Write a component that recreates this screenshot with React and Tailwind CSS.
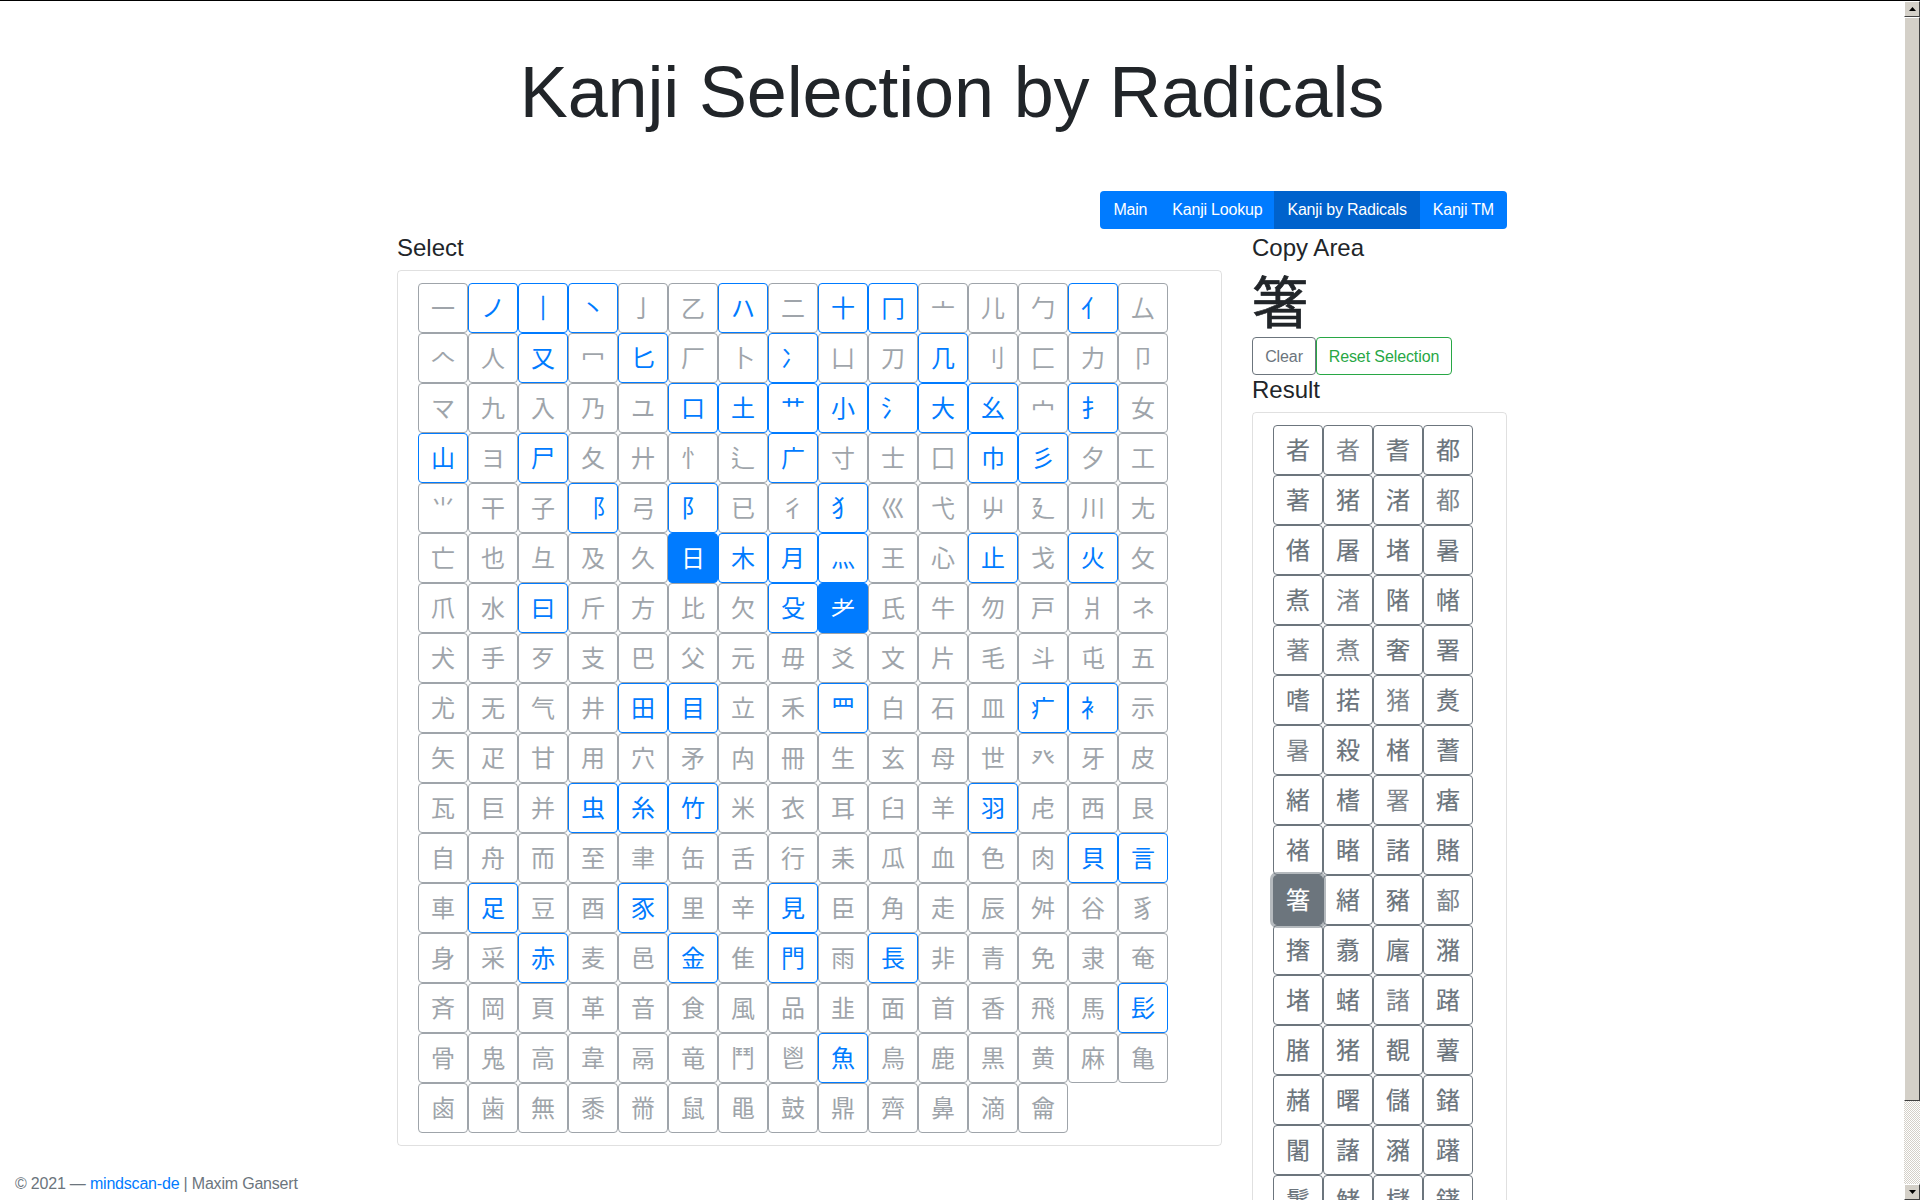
const RADICALS = [
  ['一ノ｜丶亅乙ハ二十冂亠儿勹亻厶', [1, 2, 3, 6, 8, 9, 13]],
  ['𠆢人又冖匕厂卜冫凵刀几刂匚力卩', [2, 4, 7, 10]],
  ['マ九入乃ユ口土⺾小氵大幺宀扌女', [5, 6, 7, 8, 9, 10, 11, 13]],
  ['山ヨ尸夂廾忄辶广寸士囗巾彡夕工', [0, 2, 7, 11, 12]],
  ['⺌干子⻏弓⻖已彳犭巛弋屮廴川尢', [3, 5, 8]],
  ['亡也彑及久日木月灬王心止戈火攵', [6, 7, 8, 11, 13], [5]],
  ['爪水曰斤方比欠殳耂氏牛勿戸爿ネ', [2, 7], [8]],
  ['犬手歹支巴父元毋爻文片毛斗屯五', []],
  ['尤无气井田目立禾罒白石皿疒衤示', [4, 5, 8, 12, 13]],
  ['矢疋甘用穴矛禸冊生玄母世癶牙皮', []],
  ['瓦巨并虫糸竹米衣耳臼羊羽虍西艮', [3, 4, 5, 11]],
  ['自舟而至聿缶舌行耒瓜血色肉貝言', [13, 14]],
  ['車足豆酉豕里辛見臣角走辰舛谷豸', [1, 4, 7]],
  ['身采赤麦邑金隹門雨長非青免隶奄', [2, 5, 7, 9]],
  ['斉岡頁革音食風品韭面首香飛馬髟', [14]],
  ['骨鬼高韋鬲竜鬥鬯魚鳥鹿黒黄麻亀', [8]],
  ['鹵歯無黍黹鼠黽鼓鼎齊鼻滴龠', []],
]

const RESULTS = [
  '者\uFA5B耆都',
  '著猪渚\uFA26',
  '偖屠堵暑',
  '煮\uFA46陼帾',
  '\uFA5F\uFA48奢署',
  '嗜掿\uFA16煑',
  '\uFA43殺楮蓍',
  '緒榰\uFA5A瘏',
  '褚睹諸賭',
  '箸緖豬鄐',
  '撦翥廜潴',
  '堵蝫\uFA22踷',
  '䐗猪覩薯',
  '赭曙儲鍺',
  '闍藷瀦躇',
  '鬐鯺櫧鐯',
]

// these come out in a lighter fallback font in the original
const THIN = '\uFA5B\uFA26\uFA46\uFA5F\uFA48\uFA16\uFA43\uFA5A\uFA22鄐'

const CELL = 'flex h-[50px] w-[50px] items-center justify-center rounded border pt-px text-2xl leading-none'

function RadicalCell({ char, state }) {
  if (state === 'selected') {
    return <button className={`${CELL} border-[#007bff] bg-[#007bff] text-white`}>{char}</button>
  }
  if (state === 'enabled') {
    return (
      <button className={`${CELL} border-[#007bff] text-[#007bff] ${char === '｜' ? '[-webkit-text-stroke:0.7px_#007bff]' : ''}`}>
        {char}
      </button>
    )
  }
  return <button className={`${CELL} border-[#6c757d] text-[#6c757d] opacity-65`}>{char}</button>
}

function ResultCell({ char, active }) {
  if (active) {
    return (
      <button className={`${CELL} relative z-10 border-[#6c757d] bg-[#6c757d] text-white shadow-[0_0_0_3px_rgba(108,117,125,0.5)] [-webkit-text-stroke:0.15px_#ffffff]`}>
        {char}
      </button>
    )
  }
  if (THIN.includes(char)) {
    return <button className={`${CELL} border-[#6c757d] text-[#7d858c]`}>{char}</button>
  }
  return <button className={`${CELL} border-[#6c757d] text-[#6c757d] [-webkit-text-stroke:0.15px_#6c757d]`}>{char}</button>
}

function Scrollbar() {
  return (
    <div className="flex w-4 shrink-0 flex-col">
      <div className="flex h-4 items-center justify-center border border-t-white border-r-[#404040] border-b-[#404040] border-l-white bg-[#d4d0c8]">
        <svg width="7" height="4" viewBox="0 0 7 4"><polygon points="3.5,0 7,4 0,4" fill="#000" /></svg>
      </div>
      <div className="h-[1084px] border border-t-white border-r-[#404040] border-b-[#404040] border-l-white bg-[#d4d0c8]" />
      <div className="flex-1 bg-[repeating-conic-gradient(#d4d0c8_0_25%,#ffffff_0_50%)] bg-size-[2px_2px]" />
      <div className="flex h-4 items-center justify-center border border-t-white border-r-[#404040] border-b-[#404040] border-l-white bg-[#d4d0c8]">
        <svg width="7" height="4" viewBox="0 0 7 4"><polygon points="0,0 7,0 3.5,4" fill="#000" /></svg>
      </div>
    </div>
  )
}

export default function App() {
  return (
    <div className="flex h-screen flex-col overflow-hidden bg-white font-['Liberation_Sans','Noto_Sans_CJK_JP',sans-serif] text-[#212529]">
      <div className="h-px shrink-0 bg-black" />
      <div className="relative flex min-h-0 flex-1">
        <main className="min-w-0 flex-1 overflow-hidden">
          <h1 className="mt-[48px] text-center text-[72px] leading-[1.2] font-light tracking-[-0.15px]">Kanji Selection by Radicals</h1>

          <div className="mx-auto w-[1140px] px-[15px]">
            <nav className="mt-[56px] flex justify-end">
              <div className="flex h-[38px] overflow-hidden rounded tracking-[-0.2px] text-white">
                <a className="flex items-center bg-[#007bff] px-[13px]">Main</a>
                <a className="flex items-center bg-[#007bff] px-[12px]">Kanji Lookup</a>
                <a className="flex items-center bg-[#0062cc] px-[13px]">Kanji by Radicals</a>
                <a className="flex items-center bg-[#007bff] px-[13px]">Kanji TM</a>
              </div>
            </nav>

            <div className="mt-[4px] flex gap-[30px]">
              <section className="w-[825px] shrink-0">
                <h4 className="mb-[7px] pt-px text-2xl leading-[1.2]">Select</h4>
                <div className="rounded border border-black/12 px-5 py-3">
                  <div className="grid grid-cols-[repeat(15,50px)]">
                    {RADICALS.flatMap(([chars, enabled, selected = []], r) =>
                      Array.from(chars).map((char, c) => (
                        <RadicalCell
                          key={`${r}-${c}`}
                          char={char}
                          state={selected.includes(c) ? 'selected' : enabled.includes(c) ? 'enabled' : 'disabled'}
                        />
                      ))
                    )}
                  </div>
                </div>
              </section>

              <section className="w-[255px] shrink-0">
                <h4 className="mb-[7px] pt-px text-2xl leading-[1.2]">Copy Area</h4>
                <div className="text-[56px] leading-[1.2] [-webkit-text-stroke:0.7px_#212529]">箸</div>
                <div className="flex tracking-[-0.1px]">
                  <button className="h-[38px] w-16 rounded border border-[#6c757d] pt-px text-[#6c757d]">Clear</button>
                  <button className="h-[38px] w-[136px] rounded border border-[#28a745] pt-px text-[#28a745]">Reset Selection</button>
                </div>
                <h4 className="mb-[7px] pt-px text-2xl leading-[1.2]">Result</h4>
                <div className="rounded border border-black/12 px-5 py-3">
                  <div className="grid grid-cols-[repeat(4,50px)]">
                    {RESULTS.flatMap((row, r) =>
                      Array.from(row).map((char, c) => (
                        <ResultCell key={`${r}-${c}`} char={char} active={r === 9 && c === 0} />
                      ))
                    )}
                  </div>
                </div>
              </section>
            </div>
          </div>
        </main>

        <Scrollbar />

        <footer className="absolute bottom-[4px] left-[15px] leading-6 tracking-[-0.2px] text-[#6c757d]">
          © 2021 — <a className="text-[#007bff]">mindscan-de</a> | Maxim Gansert
        </footer>
      </div>
    </div>
  )
}
